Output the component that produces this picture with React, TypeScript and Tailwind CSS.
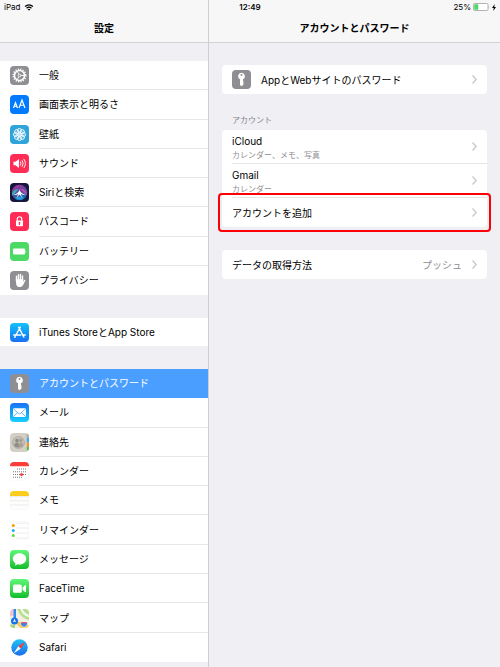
import type { ReactNode } from "react";
import { clsx } from "clsx";

type NavItem = {
  key: string;
  title: string;
  icon: ReactNode;
  active?: boolean;
};

// App icons, all on a 38 unit grid
function Tile({ className, children }: { className?: string; children?: ReactNode }) {
  return (
    <svg
      viewBox="0 0 38 38"
      className={clsx("size-[19px] shrink-0 rounded", className)}
      aria-hidden="true"
    >
      {children}
    </svg>
  );
}

function GeneralIcon() {
  return (
    <Tile className="bg-[#8e8e93]">
      <circle cx="19" cy="19" r="12.500" fill="none" stroke="#fff" strokeWidth="3" strokeDasharray="2.400 2.510" />
      <circle cx="19" cy="19" r="10" fill="none" stroke="#fff" strokeWidth="3" />
      <circle cx="19" cy="19" r="2.600" fill="none" stroke="#fff" strokeWidth="1.800" />
      <path d="M21.500 19h7M17.500 16.400l-3.500-6M17.500 21.600l-3.500 6" stroke="#fff" strokeWidth="1.800" />
    </Tile>
  );
}

function DisplayIcon() {
  return (
    <Tile className="bg-[#007aff]">
      <path
        d="M7 26l4-10.500 4 10.500M8.500 22.500h5M18 26l6-16 6 16M20.200 20.500h7.600"
        fill="none"
        stroke="#fff"
        strokeWidth="2.400"
      />
    </Tile>
  );
}

function WallpaperIcon() {
  return (
    <Tile className="bg-[#2fa4da]">
      {[0, 45, 90, 135, 180, 225, 270, 315].map((angle) => (
        <circle
          key={angle}
          cx="19"
          cy="11"
          r="4.200"
          fill="#fff"
          fillOpacity="0.200"
          stroke="#fff"
          strokeWidth="1.700"
          transform={`rotate(${angle} 19 19)`}
        />
      ))}
      <circle cx="19" cy="19" r="4.500" fill="#fff" fillOpacity="0.700" />
    </Tile>
  );
}

function SoundIcon() {
  return (
    <Tile className="bg-[#ff2d55]">
      <path d="M7 15.500h4l7-5.500v18l-7-5.500H7z" fill="#fff" />
      <path
        d="M21 15.500q2 3.500 0 7M24.500 13q4 6 0 12M28 10.500q6 8.500 0 17"
        fill="none"
        stroke="#fff"
        strokeWidth="1.800"
        strokeLinecap="round"
      />
    </Tile>
  );
}

function SiriIcon() {
  return (
    <Tile>
      <defs>
        <linearGradient id="siri" x1="0" y1="0" x2="0.4" y2="1">
          <stop offset="0" stopColor="#d23c9c" />
          <stop offset="0.45" stopColor="#7a48b8" />
          <stop offset="1" stopColor="#1d7fd0" />
        </linearGradient>
      </defs>
      <rect width="38" height="38" fill="#15173b" />
      <circle cx="19" cy="19" r="15.500" fill="url(#siri)" opacity="0.850" />
      <path d="M4 22c1-6 6-11 13-9-4 3-7 8-12 13z" fill="#2fd0b4" opacity="0.750" />
      <path d="M34 21c-2-7-8-11-14-9 4 3 8 7 13 12z" fill="#e8489c" opacity="0.700" />
      <path d="M10 30q9-5 18 0-9 7-18 0z" fill="#25b9e8" opacity="0.700" />
      <path
        d="M19 13c-1 5-5 9-12 11 5 0 8-1 10-3l-4 9 6-7 6 7-4-9c2 2 6 3 10 3-7-2-11-6-12-11z"
        fill="#fff"
      />
    </Tile>
  );
}

function PasscodeIcon() {
  return (
    <Tile className="bg-[#ff2d55]">
      <path d="M14.500 18v-4a4.500 4.500 0 0 1 9 0v4" fill="none" stroke="#fff" strokeWidth="2.400" />
      <rect x="12" y="17" width="14" height="11.500" rx="1.500" fill="#fff" />
      <path d="M19 20.500v4.500" stroke="#ff2d55" strokeWidth="2.400" strokeLinecap="round" />
    </Tile>
  );
}

function BatteryIcon() {
  return (
    <Tile className="bg-[#4cd964]">
      <rect x="6" y="13" width="24" height="12" rx="2" fill="#fff" />
      <path d="M31 16q3 3 0 6z" fill="#fff" />
    </Tile>
  );
}

function PrivacyIcon() {
  return (
    <Tile className="bg-[#8e8e93]">
      <path
        d="M13 20V10.500M17 18V7.500M21 18V7M25 20V10"
        stroke="#fff"
        strokeWidth="2.800"
        strokeLinecap="round"
      />
      <path
        d="M11.600 16.500h14.800V22l1.600-3.500q2-2 3 0l-4.500 9q-2 4.500-6.500 4.500h-2q-4 0-5.500-4.500z"
        fill="#fff"
      />
    </Tile>
  );
}

function StoreIcon() {
  return (
    <Tile className="bg-linear-to-b from-[#19c0fb] to-[#1b6ff2]">
      <path
        d="M20.500 8.500L11 25.500M17.500 8.500L27.500 28M7.500 24h14M26 24h4.500M9.500 28.500l.6-1"
        fill="none"
        stroke="#fff"
        strokeWidth="3"
        strokeLinecap="round"
      />
    </Tile>
  );
}

function KeyIcon() {
  return (
    <Tile className="bg-[#8e8e93]">
      <path
        fillRule="evenodd"
        d="M19 5.500a6.800 6.800 0 0 1 3 12.900V30l-3 2.500-3-2.500V18.400a6.800 6.800 0 0 1 3-12.900zm0 2.500a2 2 0 1 0 0 4 2 2 0 0 0 0-4z"
        fill="#fff"
      />
      <path d="M22 23h1.500v2H22zM22 27h1.500v2H22z" fill="#fff" />
    </Tile>
  );
}

function MailIcon() {
  return (
    <Tile className="bg-linear-to-b from-[#1d6ff2] to-[#1ad0fd]">
      <rect x="6" y="10.500" width="26" height="17.500" rx="2.500" fill="#fff" />
      <path
        d="M7 11.500l9.500 9q2.500 2 5 0l9.500-9M7 27l8.500-8M31 27l-8.500-8"
        fill="none"
        stroke="#3b9df6"
        strokeWidth="1.500"
      />
    </Tile>
  );
}

function ContactsIcon() {
  return (
    <Tile className="bg-[#d3cfc5]">
      <path d="M33 2h5v8h-5z" fill="#b3aea4" />
      <path d="M33.500 10h4.500v9h-4.500z" fill="#3fa9f5" />
      <path d="M33.500 19h4.500v8.500h-4.500z" fill="#f7931e" />
      <path d="M33.500 27.500h4.500v7h-4.500z" fill="#52c04a" />
      <circle cx="17" cy="19" r="12" fill="#c3beb4" stroke="#aca79d" strokeWidth="1.500" />
      <ellipse cx="14" cy="15.500" rx="3.500" ry="4" fill="#918c84" />
      <path d="M8 25.500q1-6 6-6t5 9q-6 2-11-3z" fill="#918c84" />
      <ellipse cx="21.500" cy="15" rx="3" ry="3.800" fill="#a5a097" />
      <path d="M19 19.500q7-1 7 5-3 4-6 4z" fill="#a5a097" />
    </Tile>
  );
}

function CalendarIcon() {
  return (
    <Tile className="bg-white">
      <path d="M0 0h38v8.500H0z" fill="#fc3d39" />
      <path
        d="M14 14h18M6 19.500h26M6 25h26M6 30.500h18"
        stroke="#66666a"
        strokeWidth="1.800"
        strokeDasharray="2 2"
      />
      <circle cx="23" cy="25" r="3" fill="#fc3d39" />
      <path d="M.5 9v24.500q0 4 4 4h29q4 0 4-4V9" fill="none" stroke="#f4f4f4" />
    </Tile>
  );
}

function NotesIcon() {
  return (
    <Tile className="bg-[#fdfdfc]">
      <path d="M0 0h38v10H0z" fill="#fdcd1d" />
      <path d="M0 11.500h38" stroke="#d8d4c8" strokeWidth="1.500" strokeDasharray="1.500 1" />
      <path d="M0 19.500h38M0 28h38" stroke="#e2e2e2" strokeWidth="1.200" />
      <path d="M.5 10v24q0 3.500 3.500 3.500h30q3.500 0 3.500-3.500V10" fill="none" stroke="#f3f3f3" />
    </Tile>
  );
}

function RemindersIcon() {
  return (
    <Tile className="bg-white">
      <rect x=".5" y=".5" width="37" height="37" rx="8" fill="#fff" stroke="#eeeef0" />
      <path d="M12 4.500h26M12 14h26M12 24h26M12 34h26" stroke="#e0e0e2" strokeWidth="1.200" />
      <circle cx="6.500" cy="9" r="3" fill="#ff9500" />
      <circle cx="6.500" cy="19" r="3" fill="#1badf8" />
      <circle cx="6.500" cy="29" r="3" fill="#63da38" />
    </Tile>
  );
}

function MessagesIcon() {
  return (
    <Tile className="bg-linear-to-b from-[#5df777] to-[#0bbd2a]">
      <path
        d="M19 6.500c7.500 0 13.500 4.800 13.500 11S26.500 29 19 29q-2.500 0-4.600-.6-2 2.300-5.400 2.600 2-1.800 2-4.200-5.500-3.200-5.500-8.800C5.500 11.300 11.500 6.500 19 6.500z"
        fill="#fff"
      />
    </Tile>
  );
}

function FaceTimeIcon() {
  return (
    <Tile className="bg-linear-to-b from-[#5df777] to-[#0bbd2a]">
      <rect x="6" y="11" width="17.500" height="16.500" rx="3" fill="#fff" />
      <path d="M25 17l5-4.500q2-1 2 1v11.500q0 2-2 1l-5-4.500z" fill="#fff" />
    </Tile>
  );
}

function MapsIcon() {
  return (
    <Tile className="bg-[#f4efe0]">
      <path d="M0 0h7v14H0z" fill="#f9c1cb" />
      <path d="M15 0h23v22Q20 18 15 0z" fill="#b5de93" />
      <path d="M23 0q3 11 15 14" fill="none" stroke="#f4f7e8" strokeWidth="5" />
      <path d="M0 31h10v7H0z" fill="#a6d97c" />
      <path d="M14 24l24 9v5H22L12 29z" fill="#fbc94a" />
      <path d="M9.500 0v20" stroke="#2f8af0" strokeWidth="5" />
      <circle cx="9" cy="24" r="7" fill="#1672e8" />
      <path d="M9 19.500l3 7-3-1.500-3 1.500z" fill="#fff" />
      <path d="M21 27q7-2.500 14 0 1 7-7 9.500-8-2.500-7-9.500z" fill="#4385dd" stroke="#fff" strokeWidth="1.200" />
      <path d="M22 28q6-2 12 0" stroke="#e9455d" strokeWidth="2" fill="none" />
    </Tile>
  );
}

function SafariIcon() {
  return (
    <Tile className="bg-white">
      <defs>
        <linearGradient id="safari" x1="0" y1="0" x2="0" y2="1">
          <stop offset="0" stopColor="#1fc3f7" />
          <stop offset="1" stopColor="#1c6cea" />
        </linearGradient>
      </defs>
      <rect x=".5" y=".5" width="37" height="37" rx="8" fill="#fff" stroke="#f6f6f7" />
      <circle cx="19" cy="19" r="16.500" fill="url(#safari)" />
      <path d="M30.500 7.500L21.400 21.400l-4.800-4.800z" fill="#ff3b30" />
      <path d="M7.500 30.500l9.100-13.900 4.800 4.800z" fill="#fff" />
    </Tile>
  );
}

const NAV_GROUPS: { key: string; className: string; items: NavItem[] }[] = [
  {
    key: "system",
    className: "min-h-[234px]",
    items: [
      { key: "general", title: "一般", icon: <GeneralIcon /> },
      { key: "display", title: "画面表示と明るさ", icon: <DisplayIcon /> },
      { key: "wallpaper", title: "壁紙", icon: <WallpaperIcon /> },
      { key: "sound", title: "サウンド", icon: <SoundIcon /> },
      { key: "siri", title: "Siriと検索", icon: <SiriIcon /> },
      { key: "passcode", title: "パスコード", icon: <PasscodeIcon /> },
      { key: "battery", title: "バッテリー", icon: <BatteryIcon /> },
      { key: "privacy", title: "プライバシー", icon: <PrivacyIcon /> },
    ],
  },
  {
    key: "store",
    className: "min-h-7",
    items: [{ key: "itunes", title: "iTunes StoreとApp Store", icon: <StoreIcon /> }],
  },
  {
    key: "apps",
    className: "min-h-[293px]",
    items: [
      { key: "accounts", title: "アカウントとパスワード", icon: <KeyIcon />, active: true },
      { key: "mail", title: "メール", icon: <MailIcon /> },
      { key: "contacts", title: "連絡先", icon: <ContactsIcon /> },
      { key: "calendar", title: "カレンダー", icon: <CalendarIcon /> },
      { key: "notes", title: "メモ", icon: <NotesIcon /> },
      { key: "reminders", title: "リマインダー", icon: <RemindersIcon /> },
      { key: "messages", title: "メッセージ", icon: <MessagesIcon /> },
      { key: "facetime", title: "FaceTime", icon: <FaceTimeIcon /> },
      { key: "maps", title: "マップ", icon: <MapsIcon /> },
      { key: "safari", title: "Safari", icon: <SafariIcon /> },
    ],
  },
];

const ACCOUNTS = [
  { name: "iCloud", services: "カレンダー、メモ、写真" },
  { name: "Gmail", services: "カレンダー" },
];

function StatusBar() {
  return (
    <div className="absolute inset-x-0 top-0 grid h-3.5 grid-cols-3 items-center px-1 text-[8px] leading-none">
      <div className="flex items-center gap-1">
        <span>iPad</span>
        <svg viewBox="0 0 20 15" className="h-[7px] w-[10px]" aria-label="Wi-Fi">
          <path
            d="M1.500 5.500q8.500-7.500 17 0M4.800 9q5.200-4.500 10.400 0"
            fill="none"
            stroke="#000"
            strokeWidth="2.600"
          />
          <path d="M10 14.500L7 11.200q3-2.400 6 0z" />
        </svg>
      </div>
      <time className="text-center font-semibold">12:49</time>
      <div className="flex items-center justify-end gap-0.5">
        <span>25%</span>
        <svg viewBox="0 0 34 16" className="h-2 w-[17px]" aria-label="バッテリー残量">
          <rect x="1" y="1" width="29" height="14" rx="2.500" fill="#fff" stroke="#9a9a9d" strokeWidth="1.500" />
          <rect x="2.500" y="2.500" width="8" height="11" rx="1" fill="#4cd964" />
          <path d="M31.500 5.500q2 2.500 0 5z" fill="#9a9a9d" />
        </svg>
        <svg viewBox="0 0 8 14" className="h-[7px] w-1" aria-hidden="true">
          <path d="M5.500 0L0 8h3.500L2.500 14 8 6H4.500z" />
        </svg>
      </div>
    </div>
  );
}

function PaneTitle({ children }: { children: ReactNode }) {
  return (
    <header className="border-b border-[#d2d2d6] bg-[#f7f7f8] pt-3.5">
      <h1 className="text-center text-[10px] leading-7 font-bold">{children}</h1>
    </header>
  );
}

function NavRow({ item, last }: { item: NavItem; last: boolean }) {
  return (
    <li className={clsx("flex", item.active && "bg-[#4a9eff] text-white")}>
      <a href={`#${item.key}`} className="flex flex-1 items-center gap-2.5 pl-2.5">
        {item.icon}
        <span
          className={clsx(
            "flex flex-1 items-center self-stretch border-b",
            last || item.active ? "border-transparent" : "border-[#e6e6e9]",
          )}
        >
          {item.title}
        </span>
      </a>
    </li>
  );
}

function Chevron() {
  return (
    <svg viewBox="0 0 10 18" className="h-[9px] w-[5px] shrink-0" aria-hidden="true">
      <path d="M1 1l7.500 8L1 17" fill="none" stroke="#c4c4c9" strokeWidth="2.400" />
    </svg>
  );
}

function Card({ children }: { children: ReactNode }) {
  return <div className="rounded-sm bg-white">{children}</div>;
}

function CardRow({ children }: { children: ReactNode }) {
  return (
    <button type="button" className="flex h-[29px] w-full items-center gap-2.5 px-2.5 text-left">
      {children}
      <Chevron />
    </button>
  );
}

export default function App() {
  return (
    <div className="relative flex min-h-screen bg-[#efeff4] font-[Inter,'Noto_Sans_CJK_JP',sans-serif] text-[10px] leading-[14px] text-black">
      <aside className="w-[209px] shrink-0 border-r border-[#cfcfd3]">
        <PaneTitle>設定</PaneTitle>
        <nav className="flex flex-col gap-[23px] pt-[18px]">
          {NAV_GROUPS.map((group) => (
            <ul key={group.key} className={clsx("grid auto-rows-fr bg-white", group.className)}>
              {group.items.map((item, index) => (
                <NavRow key={item.key} item={item} last={index === group.items.length - 1} />
              ))}
            </ul>
          ))}
        </nav>
      </aside>

      <main className="min-w-0 flex-1">
        <PaneTitle>アカウントとパスワード</PaneTitle>
        <div className="px-[13px] pt-[22px]">
          <Card>
            <CardRow>
              <KeyIcon />
              <span className="flex-1">AppとWebサイトのパスワード</span>
            </CardRow>
          </Card>

          <h2 className="px-2.5 pt-5 pb-1 text-[8px] leading-3 text-[#85858a]">アカウント</h2>
          <Card>
            {ACCOUNTS.map((account) => (
              <button
                key={account.name}
                type="button"
                className="flex w-full items-stretch pl-2.5 text-left"
              >
                <span className="flex flex-1 items-center border-b border-[#e6e6e9] pr-2.5">
                  <span className="flex flex-1 flex-col pt-1 pb-px">
                    <span>{account.name}</span>
                    <span className="text-[8px] text-[#8e8e93]">{account.services}</span>
                  </span>
                  <Chevron />
                </span>
              </button>
            ))}
            <div className="relative">
              <CardRow>
                <span className="flex-1">アカウントを追加</span>
              </CardRow>
              <div className="pointer-events-none absolute -inset-x-1 -inset-y-[5px] rounded border-2 border-[#fb0007]" />
            </div>
          </Card>

          <div className="pt-[23px]">
            <Card>
              <CardRow>
                <span className="flex-1">データの取得方法</span>
                <span className="text-[#8e8e93]">プッシュ</span>
              </CardRow>
            </Card>
          </div>
        </div>
      </main>

      <StatusBar />
    </div>
  );
}
